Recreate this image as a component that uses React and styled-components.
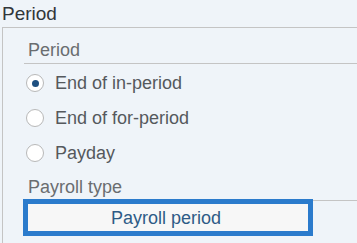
import React, { useState } from "react";
import styled, { createGlobalStyle } from "styled-components";

const Global = createGlobalStyle`
  html, body { margin: 0; padding: 0; background: #eff4f9; }
  body { font-family: "Liberation Sans", Arial, sans-serif; }
`;

const Page = styled.div`
  width: 357px;
  height: 243px;
  overflow: hidden;
  background: #eff4f9;
`;

const Title = styled.div`
  height: 27px;
  box-sizing: border-box;
  padding: 4px 0 0 2px;
  font-size: 19px;
  line-height: 20px;
  color: #32363a;
`;

const Group = styled.div`
  margin-left: 2px;
  border-left: 1px solid #c4c4c4;
  border-top: 1px solid #c4c4c4;
  height: 216px;
  box-sizing: border-box;
`;

const Inner = styled.div`
  margin-left: 21px;
  display: flex;
  flex-direction: column;
`;

const Label = styled.div`
  padding: ${(p) => p.$top}px 0 ${(p) => p.$bottom}px 4px;
  font-size: 18px;
  line-height: 20px;
  color: #6a6d70;
  border-bottom: 1px solid #c4c4c4;
`;

const RadioRow = styled.label`
  height: 35px;
  box-sizing: border-box;
  padding-top: 3px;
  display: flex;
  align-items: center;
  gap: 11px;
  padding-left: 2px;
  cursor: pointer;
`;

const Circle = styled.span`
  width: 18px;
  height: 18px;
  box-sizing: border-box;
  border-radius: 50%;
  border: 1px solid #b8b8b8;
  background: #ffffff;
  display: flex;
  align-items: center;
  justify-content: center;
  flex: none;
  &::after {
    content: "";
    width: 7px;
    height: 7px;
    border-radius: 50%;
    background: ${(p) => (p.$checked ? "#1d4f80" : "transparent")};
  }
`;

const RadioText = styled.span`
  font-size: 18px;
  line-height: 20px;
  color: #55595d;
`;

const Button = styled.button`
  margin: -2px 0 0 -1px;
  width: 290px;
  height: 37px;
  box-sizing: border-box;
  border: 5px solid #2b7bcc;
  background: #f7f7f7;
  font-family: "Liberation Sans", Arial, sans-serif;
  font-size: 18px;
  line-height: 20px;
  color: #2e5b86;
  padding: 0 4px 0 0;
  text-align: center;
  position: relative;
`;

const options = ["End of in-period", "End of for-period", "Payday"];

export default function App() {
  const [sel, setSel] = useState(0);
  return (
    <Page>
      <Global />
      <Title>Period</Title>
      <Group>
        <Inner>
          <Label $top={12} $bottom={3}>Period</Label>
          {options.map((o, i) => (
            <RadioRow key={o} onClick={() => setSel(i)}>
              <Circle $checked={sel === i} />
              <RadioText>{o}</RadioText>
            </RadioRow>
          ))}
          <Label $top={8} $bottom={3}>Payroll type</Label>
          <Button>Payroll period</Button>
        </Inner>
      </Group>
    </Page>
  );
}
